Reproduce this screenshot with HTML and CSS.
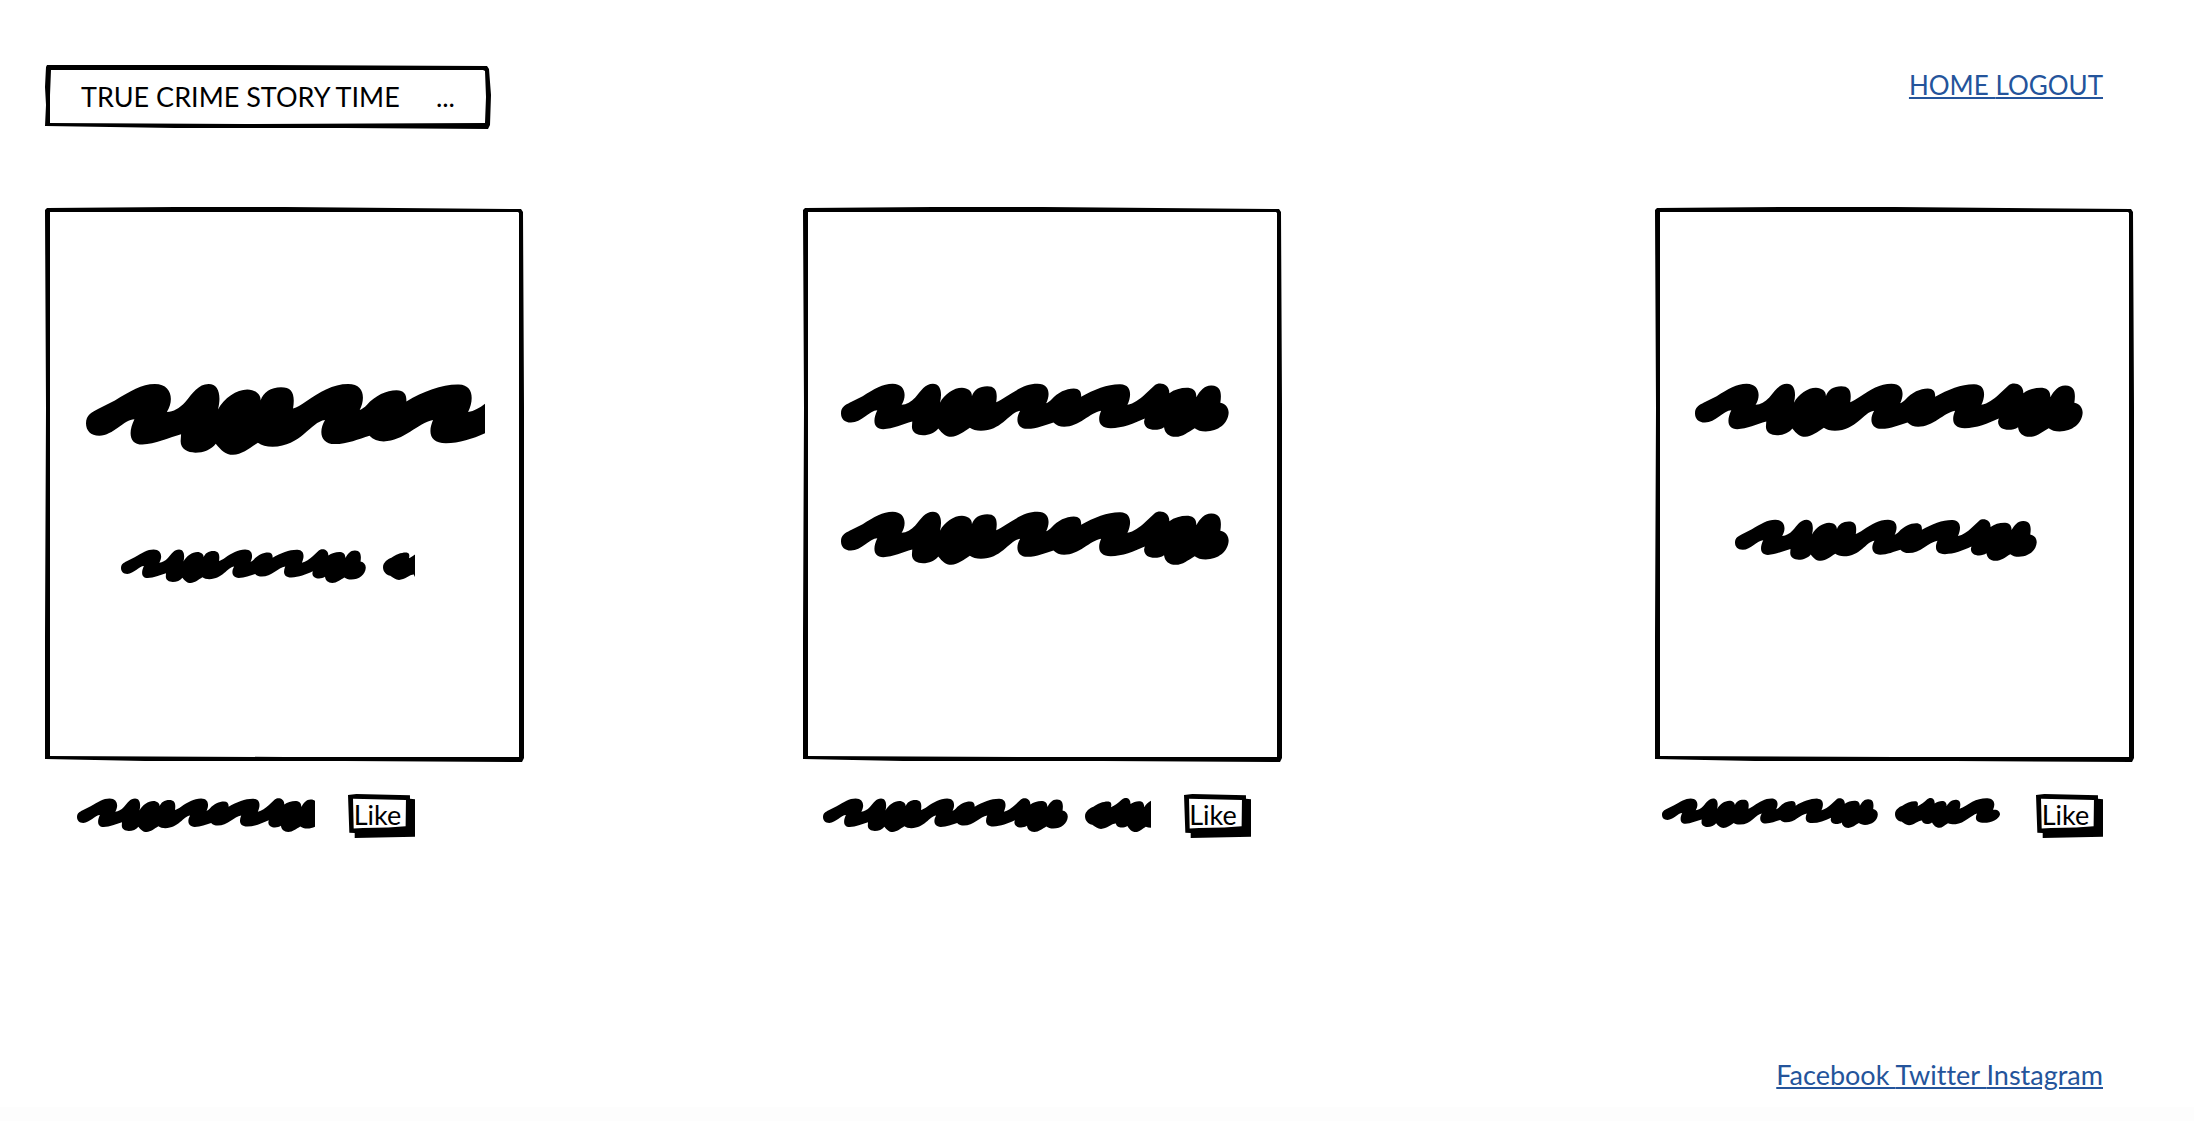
FILE: index.html
```html
<!DOCTYPE html>
<html lang="en">
<head>
<meta charset="utf-8">
<meta name="viewport" content="width=device-width, initial-scale=1">
<title>True Crime Story Time</title>
<link rel="stylesheet" href="styles.css">
</head>
<body>
<svg class="defs" aria-hidden="true">
  <defs>
    <path id="long" d="M65 160C65 142 78 135 92 128L130 109C165 88 190 72 220 72C258 72 264 108 247 135C262 134 275 127 288 113C305 93 318 72 341 72C364 72 370 98 362 129C376 103 404 84 428 84C447 84 459 96 458 109C464 90 481 79 504 79C530 79 536 95 531 127C540 124 548 119 560 111C592 90 620 72 655 72C692 72 694 105 681 130C686 129 692 124 697 119C716 98 741 86 764 86C781 86 787 96 786 111C825 88 868 72 904 73C938 74 938 108 925 135C944 131 961 119 978 103L1007 76C1018 66 1051 68 1051 100C1066 89 1088 83 1108 84C1126 86 1132 97 1132 112C1144 92 1156 76 1178 77C1207 78 1208 102 1204 129C1220 132 1229 144 1229 159C1227 192 1197 215 1160 215C1146 215 1135 211 1127 205C1108 216 1091 231 1070 231C1049 231 1037 219 1035 202C1016 215 975 214 975 185L977 176C945 191 910 205 875 205C839 205 834 181 846 153C812 159 780 201 735 201C722 201 711 196 703 188C679 195 653 207 625 207C592 207 588 177 603 153C570 157 549 213 485 213C471 213 460 210 452 204C434 215 416 231 396 231C378 231 370 221 357 206C339 232 277 236 278 200L279 185C250 193 221 207 192 208C161 208 160 179 174 151C151 151 126 188 95 188C75 188 65 176 65 160Z"/>
    <path id="short" d="M762 106C762 93 775 84 784 81C795 72 812 66 824 67C831 68 832 74 830 82C840 78 850 69 857 63C866 54 882 56 881 74C889 67 902 65 909 67C915 69 917 75 917 82C923 71 934 62 946 63C959 64 960 76 956 90C967 86 981 76 994 69C1009 61 1029 57 1044 59C1062 62 1063 79 1056 93C1070 91 1077 98 1077 107C1074 121 1051 132 1030 132C1006 132 1000 121 1008 104C992 108 970 134 944 136C935 137 928 135 921 133C911 139 904 147 895 147C884 147 878 139 873 131C861 139 844 136 843 125C831 125 819 139 804 139C795 139 789 133 781 128C773 128 762 119 762 106Z"/>
  </defs>
</svg>

<header class="top">
  <h1 class="brand"><span>TRUE CRIME STORY TIME</span><span>...</span></h1>
  <nav class="links" aria-label="Main"><a href="#home">HOME </a><a href="#logout">LOGOUT</a></nav>
</header>

<main class="stories">
  <article class="story first">
    <div class="frame">
      <svg class="line" width="399" height="72" viewBox="65 70 898 161"><use href="#long"/></svg>
      <div class="line sub">
        <svg width="245" height="34" viewBox="65 70 1165 161"><use href="#long"/></svg>
        <svg width="32" height="34" viewBox="762 58 84 89" preserveAspectRatio="xMinYMin slice"><use href="#short"/></svg>
      </div>
    </div>
    <footer class="caption">
      <svg width="238" height="34" viewBox="65 70 1132 161"><use href="#long"/></svg>
      <button class="like" type="button">Like</button>
    </footer>
  </article>

  <article class="story second">
    <div class="frame">
      <svg class="line" width="388" height="54" viewBox="65 70 1165 161"><use href="#long"/></svg>
      <svg class="line" width="388" height="54" viewBox="65 70 1165 161"><use href="#long"/></svg>
    </div>
    <footer class="caption">
      <svg width="245" height="34" viewBox="65 70 1165 161"><use href="#long"/></svg>
      <svg width="66" height="34" viewBox="762 58 173 89" preserveAspectRatio="xMinYMin slice"><use href="#short"/></svg>
      <button class="like" type="button">Like</button>
    </footer>
  </article>

  <article class="story third">
    <div class="frame">
      <svg class="line" width="388" height="54" viewBox="65 70 1165 161"><use href="#long"/></svg>
      <svg class="line sub" width="302" height="42" viewBox="65 70 1165 161"><use href="#long"/></svg>
    </div>
    <footer class="caption">
      <svg width="216" height="30" viewBox="65 70 1165 161"><use href="#long"/></svg>
      <svg width="105" height="30" viewBox="762 58 315 89"><use href="#short"/></svg>
      <button class="like" type="button">Like</button>
    </footer>
  </article>
</main>

<footer class="bottom">
  <nav class="links" aria-label="Social"><a href="#facebook">Facebook </a><a href="#twitter">Twitter </a><a href="#instagram">Instagram</a></nav>
</footer>
</body>
</html>
```
FILE: styles.css
```css
* {
  box-sizing: border-box;
}

body {
  margin: 0;
  min-height: 100vh;
  display: flex;
  flex-direction: column;
  background: #fff;
  color: #000;
  font: 27px/32px Lato, "Open Sans", sans-serif;
  font-variant-ligatures: none;
}

svg {
  display: block;
  flex: none;
}

.defs {
  position: absolute;
  width: 0;
  height: 0;
}

.top {
  display: flex;
  justify-content: space-between;
  align-items: flex-start;
  padding: 65px 91px 0 45px;
}

.brand {
  display: flex;
  justify-content: space-between;
  width: 446px;
  margin: 0;
  padding: 16px 36px;
  font: inherit;
  background: url("data:image/svg+xml,%3Csvg xmlns='http://www.w3.org/2000/svg' viewBox='0 0 446 64' preserveAspectRatio='none'%3E%3Cpath fill-rule='evenodd' d='M2 0 220 0 442 1 444 4 446 30 445 60 443 64 300 63 130 63 0 61 1 40 0 22 1 2ZM6 5 5 30 5 58 200 59 440 58 441 32 440 6 438 5 330 5 220 5Z'/%3E%3C/svg%3E") 0 0 / 100% 100% no-repeat;
}

.links a {
  color: #24549b;
  text-decoration: underline;
}

.links {
  white-space: pre;
}

.top .links {
  padding-top: 4px;
  font-size: 26px;
}

.stories {
  display: grid;
  grid-template-columns: minmax(479px, 758fr) minmax(479px, 853fr) 479px;
  padding: 78px 60px 0 45px;
}

.frame {
  width: 479px;
  height: 555px;
  padding: 176px 0 0 38px;
  display: flex;
  flex-direction: column;
  align-items: flex-start;
  gap: 74px;
  background: url("data:image/svg+xml,%3Csvg xmlns='http://www.w3.org/2000/svg' viewBox='0 0 479 555' preserveAspectRatio='none'%3E%3Cpath fill-rule='evenodd' d='M2 1 130 0 240 0 476 2 478 5 479 200 479 551 477 555 300 554 100 554 0 552 0 430 1 200 0 3ZM5 5 5 200 5 549 240 550 474 550 474 300 474 6 473 5 400 5 240 5Z'/%3E%3C/svg%3E") 0 0 / 100% 100% no-repeat;
}

.first .frame {
  padding-left: 41px;
  gap: 94px;
}

.third .frame {
  padding-left: 40px;
  gap: 82px;
}

.sub {
  display: flex;
  gap: 17px;
  margin-left: 35px;
}

.third .sub {
  margin-left: 40px;
}

.caption {
  display: flex;
  align-items: flex-start;
  gap: 17px;
  padding: 32px 0 0 32px;
}

.second .caption {
  padding-left: 20px;
}

.third .caption {
  padding-left: 7px;
}

.third .like {
  margin-left: 19px;
}

.caption > svg {
  margin-top: 4px;
}

.like {
  width: 67px;
  height: 44px;
  margin: 0 0 0 16px;
  padding: 0 8px 2px 0;
  border: 0;
  color: inherit;
  font: inherit;
  line-height: 40px;
  text-align: center;
  cursor: pointer;
  background: url("data:image/svg+xml,%3Csvg xmlns='http://www.w3.org/2000/svg' viewBox='865 46 200 131' preserveAspectRatio='none'%3E%3Cpath fill-rule='evenodd' d='M865 49 890 46 1050 50 1050 60 1065 62 1065 173 885 177 885 162 869 161ZM880 60 882 149 910 147 985 146 1037 142 1038 64Z'/%3E%3C/svg%3E") 0 0 / 100% 100% no-repeat;
}

.bottom {
  margin-top: auto;
  padding: 0 91px 16px;
  display: flex;
  justify-content: flex-end;
  border-bottom: 14px solid #fdfdfd;
}
```
